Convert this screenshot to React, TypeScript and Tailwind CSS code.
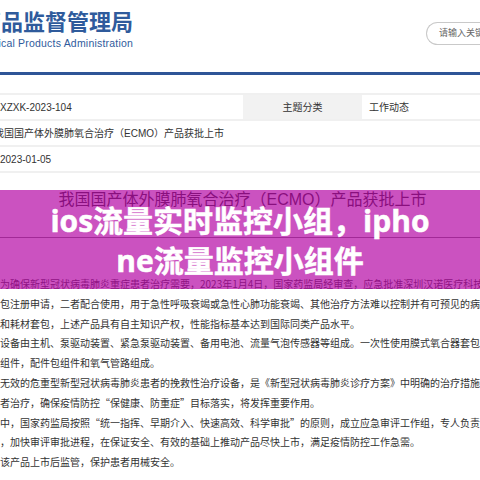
import React from 'react';

const bodyLines = [
  '为确保新型冠状病毒肺炎重症患者治疗需要，2023年1月4日，国家药监局经审查，应急批准深圳汉诺医疗科技股份有限公司',
  '包注册申请，二者配合使用，用于急性呼吸衰竭或急性心肺功能衰竭、其他治疗方法难以控制并有可预见的病情',
  '和耗材套包，上述产品具有自主知识产权，性能指标基本达到国际同类产品水平。',
  '设备由主机、泵驱动装置、紧急泵驱动装置、备用电池、流量气泡传感器等组成。一次性使用膜式氧合器套包由',
  '组件，配件包组件和氧气管路组成。',
  '无效的危重型新型冠状病毒肺炎患者的挽救性治疗设备，是《新型冠状病毒肺炎诊疗方案》中明确的治疗措施，',
  '者治疗，确保疫情防控“保健康、防重症”目标落实，将发挥重要作用。',
  '中，国家药监局按照“统一指挥、早期介入、快速高效、科学审批”的原则，成立应急审评工作组，专人负责、',
  '，加快审评审批进程，在保证安全、有效的基础上推动产品尽快上市，满足疫情防控工作急需。',
  '该产品上市后监管，保护患者用械安全。',
];

const App = () => {
  return (
    <div className="relative w-[480px] h-[480px] overflow-hidden bg-white text-[#333] font-['Liberation_Sans','Noto_Sans_CJK_SC',sans-serif]">
      <header className="h-[72px] flex justify-between">
        <div className="w-[133px] pt-[9px] flex flex-col items-end whitespace-nowrap text-[#2f5b9c]">
          <div className="text-[22px] leading-[27px] font-bold">国家药品监督管理局</div>
          <div className="text-[10.5px] leading-[14px] tracking-[0.2px]">National Medical Products Administration</div>
        </div>
        <div className="mt-[22px] w-[54px] h-[23px] pl-3 border border-r-0 border-[#c9c9c9] rounded-l-full text-[9px] leading-[21px] text-[#666] whitespace-nowrap overflow-hidden">
          请输入关键词
        </div>
      </header>
      <div className="h-[3px] bg-[#2f5597]"></div>

      <div className="mt-[18px] border-t-2 border-[#f0f0f0] text-[10px] leading-[26px] whitespace-nowrap">
        <div className="h-[26px] flex border-b-2 border-[#f0f0f0]">
          <div className="w-[243px]">XZXK-2023-104</div>
          <div className="w-[119px] text-center bg-[#f2f2f2]">主题分类</div>
          <div className="pl-[7px]">工作动态</div>
        </div>
        <div className="h-[26px] -ml-[6px] border-b-2 border-[#f0f0f0]">我国国产体外膜肺氧合治疗（ECMO）产品获批上市</div>
        <div className="h-[26px] border-b-2 border-[#f0f0f0]">2023-01-05</div>
      </div>

      <h2 className="mt-[16px] pl-[5px] text-center text-[16px] leading-[22px] text-[#222] whitespace-nowrap">我国国产体外膜肺氧合治疗（ECMO）产品获批上市</h2>
      <div className="mt-[26px] border-t border-[#777]"></div>

      <div className="mt-[36px] text-[10px] leading-[19.8px] whitespace-nowrap font-['Noto_Sans_CJK_SC',sans-serif]">
        {bodyLines.map(line => (
          <p key={line}>{line}</p>
        ))}
      </div>

      <div className="absolute left-0 right-0 top-[190px] h-[99px] pt-[2px] bg-[#b508a5]/70 flex items-center justify-center px-[48px]">
        <h1 className="w-full text-center text-white text-[30px] leading-[40px] font-bold break-all [-webkit-text-stroke:0.5px_#fff] font-['Open_Sans','Noto_Sans_CJK_SC',sans-serif]">
          ios流量实时监控小组，iphone流量监控小组件
        </h1>
      </div>
    </div>
  );
};

export default App;
